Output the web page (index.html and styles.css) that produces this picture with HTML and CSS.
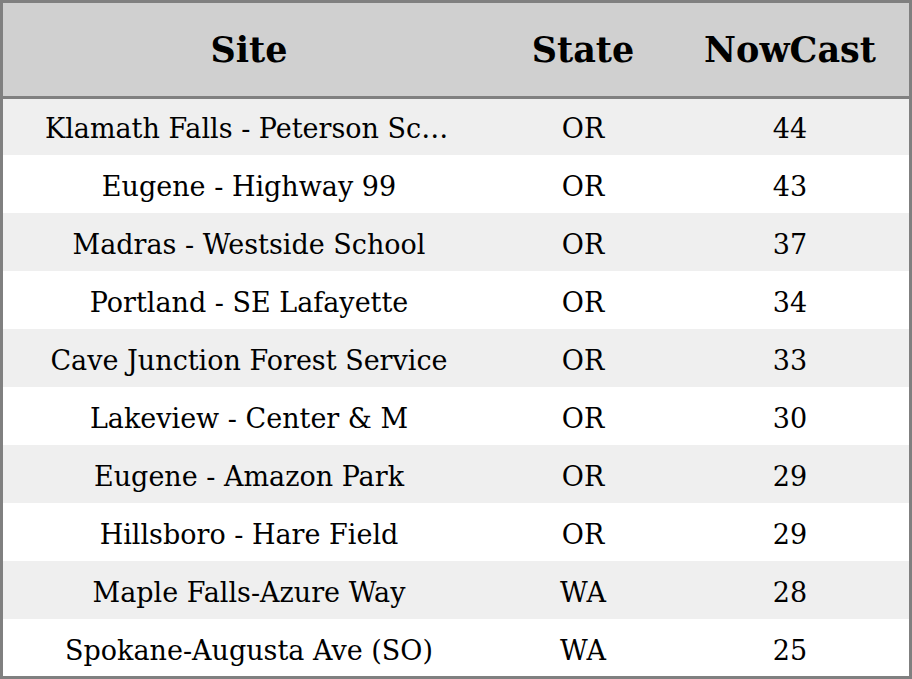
FILE: index.html
```html
<!DOCTYPE html>
<html>
<head>
<meta charset="utf-8">
<link rel="stylesheet" href="styles.css">
</head>
<body>
<div class="frame">
<table class="grid">
<colgroup><col class="c-site"><col class="c-state"><col class="c-now"></colgroup>
<thead>
<tr><th>Site</th><th>State</th><th>NowCast</th></tr>
</thead>
<tbody>
<tr><td class="site">Klamath Falls - Peterson School</td><td>OR</td><td>44</td></tr>
<tr><td class="site">Eugene - Highway 99</td><td>OR</td><td>43</td></tr>
<tr><td class="site">Madras - Westside School</td><td>OR</td><td>37</td></tr>
<tr><td class="site">Portland - SE Lafayette</td><td>OR</td><td>34</td></tr>
<tr><td class="site">Cave Junction Forest Service</td><td>OR</td><td>33</td></tr>
<tr><td class="site">Lakeview - Center &amp; M</td><td>OR</td><td>30</td></tr>
<tr><td class="site">Eugene - Amazon Park</td><td>OR</td><td>29</td></tr>
<tr><td class="site">Hillsboro - Hare Field</td><td>OR</td><td>29</td></tr>
<tr><td class="site">Maple Falls-Azure Way</td><td>WA</td><td>28</td></tr>
<tr><td class="site">Spokane-Augusta Ave (SO)</td><td>WA</td><td>25</td></tr>
</tbody>
</table>
</div>
</body>
</html>
```

FILE: styles.css
```css
html, body {
  margin: 0;
  padding: 0;
  background: #ffffff;
}
.frame {
  width: 912px;
  height: 679px;
  box-sizing: border-box;
  border: 3px solid #808080;
  overflow: hidden;
  background: #ffffff;
}
.grid {
  width: 906px;
  border-collapse: collapse;
  table-layout: fixed;
  font-family: "DejaVu Serif", serif;
  color: #000000;
}
.c-site { width: 492px; }
.c-state { width: 176px; }
.c-now { width: 238px; }
.grid th {
  height: 94px;
  padding: 0;
  box-sizing: border-box;
  background: #d0d0d0;
  border-bottom: 3px solid #808080;
  font-size: 35px;
  font-weight: bold;
  text-align: center;
  vertical-align: middle;
}
.grid td {
  height: 58px;
  padding: 4px 0 0;
  box-sizing: border-box;
  font-size: 27px;
  text-align: center;
  vertical-align: middle;
  white-space: nowrap;
}
.grid td.site {
  padding: 4px 42px 0;
  overflow: hidden;
  text-overflow: ellipsis;
}
.grid tbody tr:nth-child(odd) td {
  background: #efefef;
}
```
